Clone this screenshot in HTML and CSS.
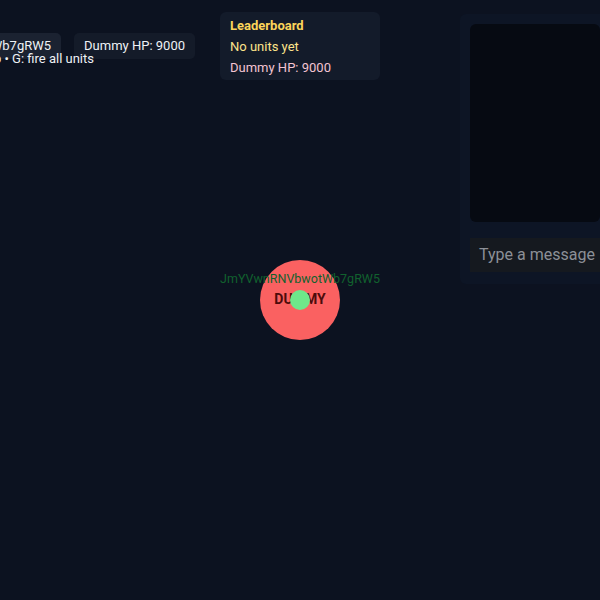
FILE: index.html
```html
<!DOCTYPE html>
<html>
<head>
<meta charset="utf-8">
<link rel="stylesheet" href="styles.css">
</head>
<body>
<div class="game">
  <div class="world">
    <div class="unit">
      <div class="unit-name">JmYVwnRNVbwotWb7gRW5</div>
      <div class="dummy"><span class="dummy-label">DUMMY</span></div>
      <div class="dot"></div>
    </div>
  </div>

  <div class="hud-left">
    <div class="hud-row">
      <div class="chip chip-name">Player: JmYVwnRNVbwotWb7gRW5</div>
      <div class="chip chip-hp">Dummy HP: 9000</div>
    </div>
    <div class="hint">WASD: move • Click: shoot • Space: drop • G: fire all units</div>
  </div>

  <div class="leaderboard">
    <div class="lb-title">Leaderboard</div>
    <div class="lb-empty">No units yet</div>
    <div class="lb-hp">Dummy HP: 9000</div>
  </div>

  <div class="sidebar">
    <div class="chat-log"></div>
    <div class="chat-input">Type a message</div>
  </div>
</div>
</body>
</html>
```

FILE: styles.css
```css
* { box-sizing: border-box; }
html, body {
  margin: 0;
  padding: 0;
  width: 600px;
  height: 600px;
  overflow: hidden;
  background: #0c1220;
  font-family: Roboto, "Noto Sans", sans-serif;
}
.game {
  position: relative;
  width: 600px;
  height: 600px;
  background: #0c1220;
}
.world {
  position: absolute;
  inset: 0;
}
.unit {
  position: absolute;
  left: 260px;
  top: 260px;
  width: 80px;
  height: 80px;
}
.dummy {
  width: 80px;
  height: 80px;
  border-radius: 50%;
  background: #fa6161;
  display: flex;
  align-items: center;
  justify-content: center;
}
.dummy-label {
  font-weight: 700;
  font-size: 14px;
  color: #4d0b0b;
  margin-top: -2px;
}
.unit-name {
  position: absolute;
  left: -60px;
  width: 200px;
  top: 12px;
  text-align: center;
  font-size: 12.5px;
  color: #11612e;
  z-index: 2;
  line-height: 14px;
}
.dot {
  position: absolute;
  left: 30px;
  top: 30px;
  width: 20px;
  height: 20px;
  border-radius: 50%;
  background: #6ee78a;
}
.hud-left {
  position: absolute;
  top: 33px;
  right: 405px;
  display: flex;
  flex-direction: column;
  align-items: flex-end;
  color: #eef1f5;
  font-size: 13px;
}
.hud-row {
  display: flex;
  gap: 13px;
}
.chip {
  height: 26px;
  line-height: 26px;
  padding: 0 10px;
  border-radius: 5px;
  white-space: nowrap;
}
.chip-name { background: #1b2231; }
.chip-hp { background: #141b29; }
.hint {
  margin-top: -8px;
  font-size: 13px;
  line-height: 15px;
  white-space: nowrap;
  margin-right: 101px;
}
.leaderboard {
  position: absolute;
  left: 220px;
  top: 12px;
  width: 160px;
  height: 68px;
  padding: 5px 10px;
  background: #131b2a;
  border-radius: 6px;
  font-size: 13px;
  line-height: 21px;
}
.lb-title { font-weight: 700; color: #fcd55a; line-height: 17px; margin-bottom: 2px; }
.lb-empty { color: #fde38a; }
.lb-hp { color: #f4c4d2; }
.sidebar {
  position: absolute;
  left: 460px;
  top: 14px;
  width: 150px;
  height: 270px;
  padding: 10px;
  background: #0d1525;
  border-radius: 6px;
  display: flex;
  flex-direction: column;
  gap: 16px;
}
.chat-log {
  height: 198px;
  background: #060a12;
  border-radius: 6px;
  flex: none;
}
.chat-input {
  height: 34px;
  line-height: 34px;
  padding: 0 9px;
  background: #15191f;
  color: #8c9097;
  font-size: 16px;
  white-space: nowrap;
}
```
